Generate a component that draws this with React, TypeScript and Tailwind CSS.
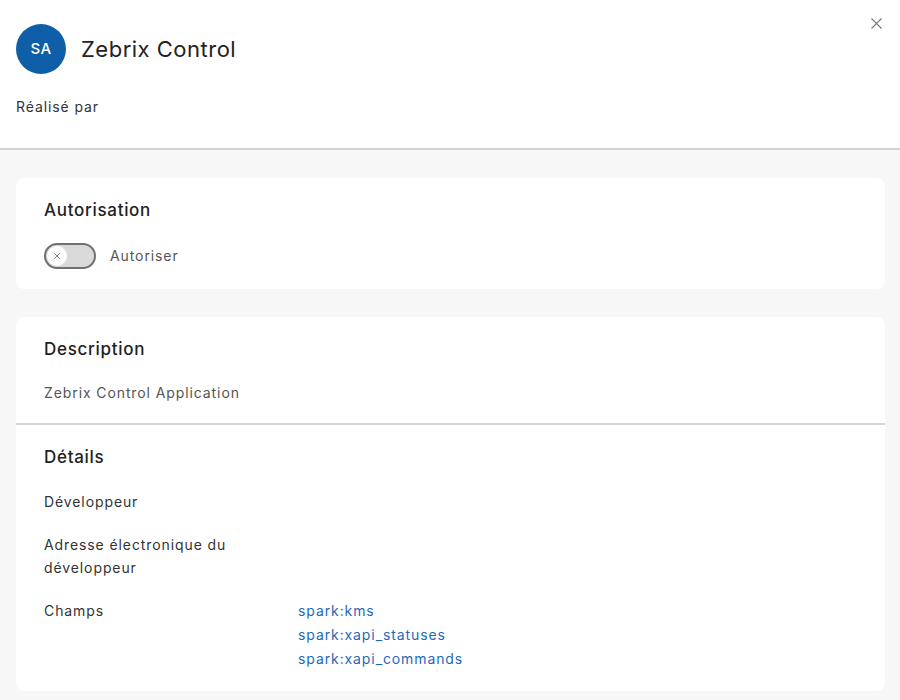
import { X } from "lucide-react";

const scopes = ["spark:kms", "spark:xapi_statuses", "spark:xapi_commands"];

function Toggle({ label }: { label: string }) {
  return (
    <label className="flex items-center gap-[14px]">
      <span className="flex h-[26px] w-[52px] items-center rounded-full border-2 border-[#707070] bg-[#dadada] px-[1px]">
        <span className="flex h-[20px] w-[20px] items-center justify-center rounded-full bg-white">
          <X className="h-[10px] w-[10px] text-[#6a6a6a]" strokeWidth={2} />
        </span>
      </span>
      <span className="text-[14px] leading-5 tracking-[0.9px] text-[#555]">{label}</span>
    </label>
  );
}

export default function App() {
  return (
    <div
      className="min-h-screen bg-[#f7f7f7] text-[#222]"
      style={{ fontFamily: "Inter, 'Noto Sans', sans-serif" }}
    >
      {/* Header */}
      <header className="relative border-b-2 border-[#d2d2d2] bg-white px-4 pb-[31px] pt-6">
        <button className="absolute right-[14px] top-[14px] text-[#7a7a7a]" aria-label="Fermer">
          <X className="h-[19px] w-[19px]" strokeWidth={1.4} />
        </button>
        <div className="flex items-center gap-[15px]">
          <div className="flex h-[50px] w-[50px] items-center justify-center rounded-full bg-[#0f5ea8] text-[15px] font-medium tracking-[0.3px] text-white">
            SA
          </div>
          <h1 className="text-[22px] leading-7 tracking-[0.5px] text-[#222]">Zebrix Control</h1>
        </div>
        <p className="mt-[23px] text-[14px] leading-5 tracking-[0.9px] text-[#333]">Réalisé par</p>
      </header>

      <main className="flex flex-col gap-7 px-4 pt-7 pr-[15px]">
        {/* Authorization */}
        <section className="rounded-lg bg-white px-7 pb-5 pt-5">
          <h2 className="text-[17px] font-medium leading-6 tracking-[0.7px] text-[#222]">Autorisation</h2>
          <div className="mt-[21px]">
            <Toggle label="Autoriser" />
          </div>
        </section>

        {/* Description and details */}
        <section className="rounded-lg bg-white">
          <div className="border-b-2 border-[#d6d6d6] px-7 pb-[20px] pt-5">
            <h2 className="text-[17px] font-medium leading-6 tracking-[0.7px] text-[#222]">Description</h2>
            <p className="mt-[22px] text-[14px] leading-5 tracking-[0.9px] text-[#555]">
              Zebrix Control Application
            </p>
          </div>
          <div className="px-7 pb-5 pt-[20px]">
            <h2 className="text-[17px] font-medium leading-6 tracking-[0.7px] text-[#222]">Détails</h2>
            <dl className="mt-[21px] grid grid-cols-[254px_1fr] gap-y-[20px] text-[14px] leading-[23px] tracking-[0.9px] text-[#333]">
              <dt>Développeur</dt>
              <dd></dd>
              <dt className="pr-4">Adresse électronique du développeur</dt>
              <dd></dd>
              <dt>Champs</dt>
              <dd className="flex flex-col text-[#1f68b9]">
                {scopes.map((s) => (
                  <a key={s} href="#" className="leading-[24px]">
                    {s}
                  </a>
                ))}
              </dd>
            </dl>
          </div>
        </section>
      </main>
    </div>
  );
}
